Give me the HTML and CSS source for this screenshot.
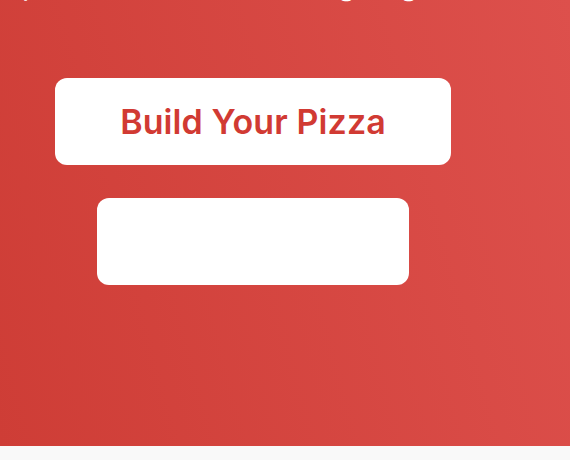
FILE: index.html
```html
<!DOCTYPE html>
<html lang="en">
<head>
<meta charset="utf-8">
<title>Build Your Pizza</title>
<link rel="stylesheet" href="styles.css">
</head>
<body>
  <section class="hero">
    <p class="tagline">pie that tastes like a big hug from home</p>
    <div class="actions">
      <a class="btn btn-primary" href="#build">Build Your Pizza</a>
      <a class="btn btn-blank" href="#menu" aria-label="View menu"></a>
    </div>
  </section>
  <div class="below"></div>
</body>
</html>
```

FILE: styles.css
```css
* { box-sizing: border-box; }
html, body { margin: 0; padding: 0; }
body {
  font-family: Inter, "Noto Sans", "Liberation Sans", sans-serif;
  background: #f9f9f9;
  overflow: hidden;
}
.hero {
  height: 446px;
  background: linear-gradient(75deg, #ce3d36 0%, #dd504c 100%);
  padding: 0 64px 0 22px;
  overflow: hidden;
}
.tagline {
  margin: -34px 0 0 0;
  font-size: 30px;
  line-height: 36px;
  color: #ffffff;
  white-space: nowrap;
}
.actions {
  margin-top: 76px;
  margin-left: -22px;
  display: flex;
  flex-direction: column;
  align-items: center;
  gap: 33px;
}
.btn {
  display: flex;
  align-items: center;
  justify-content: center;
  height: 87px;
  border-radius: 12px;
  background: #ffffff;
  text-decoration: none;
}
.btn-primary {
  width: 396px;
  color: #d13a33;
  font-size: 34px;
  font-weight: 600;
  letter-spacing: 0.1px;
}
.btn-blank {
  width: 312px;
}
.below {
  height: 14px;
  background: #f9f9f9;
}
```
